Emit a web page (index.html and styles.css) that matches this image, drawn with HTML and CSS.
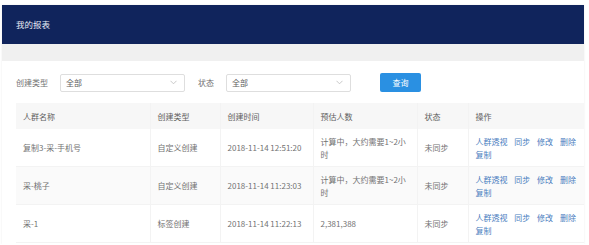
FILE: index.html
```html
<!DOCTYPE html>
<html lang="zh-CN">
<head>
<meta charset="UTF-8">
<title>我的报表</title>
<link rel="stylesheet" href="styles.css">
</head>
<body>

<div class="app">
  <div class="header">我的报表</div>
  <div class="band"></div>

  <div class="content">
    <div class="filters">
      <span class="label">创建类型</span>
      <div class="select">全部<svg width="7" height="5" viewBox="0 0 7 5"><path d="M0.5 0.8 L3.5 3.8 L6.5 0.8" fill="none" stroke="#bbb" stroke-width="0.8"/></svg></div>
      <span class="label">状态</span>
      <div class="select">全部<svg width="7" height="5" viewBox="0 0 7 5"><path d="M0.5 0.8 L3.5 3.8 L6.5 0.8" fill="none" stroke="#bbb" stroke-width="0.8"/></svg></div>
      <button class="btn">查询</button>
    </div>

    <table class="grid">
      <colgroup>
        <col style="width:134px">
        <col style="width:70px">
        <col style="width:93px">
        <col style="width:104px">
        <col style="width:51px">
        <col style="width:116px">
      </colgroup>
      <thead>
        <tr>
          <th>人群名称</th>
          <th>创建类型</th>
          <th>创建时间</th>
          <th>预估人数</th>
          <th>状态</th>
          <th>操作</th>
        </tr>
      </thead>
      <tbody>
        <tr>
          <td>复制3-采-手机号</td>
          <td>自定义创建</td>
          <td>2018-11-14 12:51:20</td>
          <td>计算中，大约需要1~2小时</td>
          <td>未同步</td>
          <td class="ops"><a>人群透视</a> <a>同步</a> <a>修改</a> <a>删除</a> <a>复制</a></td>
        </tr>
        <tr>
          <td>采-桃子</td>
          <td>自定义创建</td>
          <td>2018-11-14 11:23:03</td>
          <td>计算中，大约需要1~2小时</td>
          <td>未同步</td>
          <td class="ops"><a>人群透视</a> <a>同步</a> <a>修改</a> <a>删除</a> <a>复制</a></td>
        </tr>
        <tr>
          <td>采-1</td>
          <td>标签创建</td>
          <td>2018-11-14 11:22:13</td>
          <td>2,381,388</td>
          <td>未同步</td>
          <td class="ops"><a>人群透视</a> <a>同步</a> <a>修改</a> <a>删除</a> <a>复制</a></td>
        </tr>
      </tbody>
    </table>
  </div>
</div>

</body>
</html>
```

FILE: styles.css
```css
html, body {
  margin: 0;
  padding: 0;
  background-color: white;
  font-family: "Noto Sans CJK SC", "Noto Sans", sans-serif;
  font-size: 8px;
  color: #727272;
}
.app {
  width: 582px;
  margin: 5px 0 0 2px;
  background-color: white;
  box-shadow: 0 0 2px rgba(0,0,0,0.08);
}
.header {
  height: 39px;
  line-height: 39px;
  padding-left: 14px;
  background-color: #10245c;
  color: #e8ecf5;
  font-size: 8.5px;
}
.band {
  height: 17px;
  background-color: #f0f0f0;
}
.content {
  padding: 12px 0 1px 14px;
}
.filters {
  display: flex;
  align-items: center;
  height: 19px;
  margin-bottom: 11px;
}
.label {
  margin-right: 12px;
}
.label + .select + .label {
  margin-right: 12px;
}
.select {
  width: 125px;
  height: 18px;
  box-sizing: border-box;
  border: 1px solid #dedede;
  border-radius: 2px;
  padding: 0 7px 0 5px;
  display: flex;
  align-items: center;
  justify-content: space-between;
  color: #606060;
  margin-right: 13px;
}
.select + .btn {
  margin-left: 16px;
}
.btn {
  width: 41px;
  height: 19px;
  border: none;
  border-radius: 2px;
  background-color: #2a90e2;
  color: white;
  font-family: inherit;
  font-size: 8px;
  padding: 0;
}
.grid {
  width: 568px;
  border-collapse: collapse;
  table-layout: fixed;
}
.grid th, .grid td {
  text-align: left;
  font-weight: normal;
  padding: 0 7px;
  border-right: 1px solid #f3f3f3;
  vertical-align: middle;
  line-height: 13px;
}
.grid th:last-child, .grid td:last-child {
  border-right: none;
}
.grid th {
  height: 26px;
  background-color: #f7f7f7;
  color: #606060;
}
.grid td {
  height: 37px;
  border-bottom: 1px solid #f3f3f3;
}
.grid tbody tr:nth-child(2) td {
  background-color: #fafafa;
}
.grid td.ops {
  padding-right: 2px;
}
.ops a {
  color: #4b7ec0;
  margin-right: 5px;
}
```
